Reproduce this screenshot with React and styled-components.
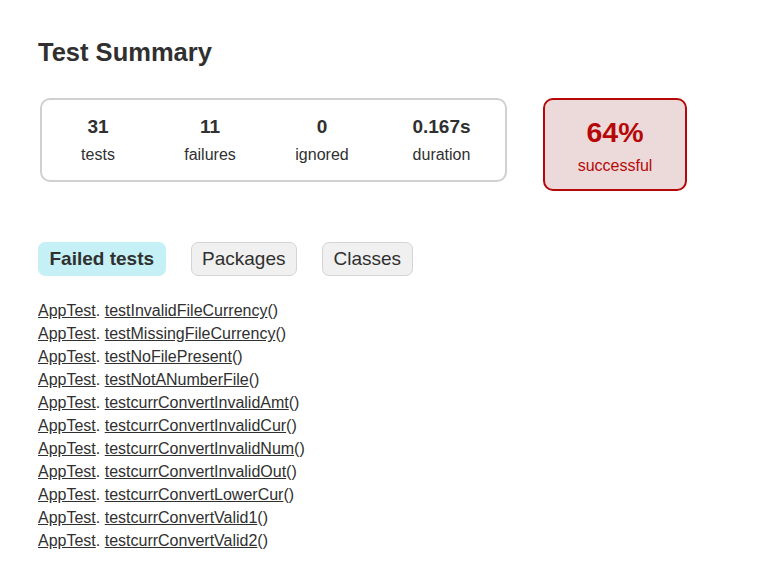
import styled, { createGlobalStyle } from 'styled-components';

const GlobalStyle = createGlobalStyle`
  body {
    margin: 0;
    padding: 0;
    background: #ffffff;
    font-family: "Liberation Sans", Arial, sans-serif;
    font-size: 16px;
    color: #303030;
  }
`;

const Content = styled.div`
  padding: 38px 38px 20px;
`;

const Title = styled.h1`
  margin: 0;
  font-size: 25.5px;
  font-weight: bold;
  line-height: 1.15;
`;

const Summary = styled.div`
  display: flex;
  align-items: flex-start;
  margin-top: 31px;
  margin-left: 2px;
`;

const SummaryGroup = styled.div`
  display: flex;
  border: 2px solid #d0d0d0;
  border-radius: 10px;
`;

const InfoBox = styled.div`
  width: ${(p) => p.$width || 112}px;
  padding: 16px 0 16px;
  text-align: center;
`;

const Counter = styled.p`
  margin: 0 0 8px;
  font-size: 19px;
  font-weight: bold;
  line-height: 22px;
`;

const Label = styled.p`
  margin: 0;
  line-height: 18px;
`;

const SuccessRate = styled.div`
  width: 140px;
  margin-left: 36px;
  padding: 16px 0 14px;
  text-align: center;
  color: #b60808;
  background: #ecdada;
  border: 2px solid #b60808;
  border-radius: 10px;
`;

const Percent = styled.p`
  margin: 0 0 8px;
  font-size: 28.5px;
  font-weight: bold;
  line-height: 33px;
`;

const Tabs = styled.ul`
  display: flex;
  list-style: none;
  margin: 51px 0 0;
  padding: 0;
  gap: 25px;
`;

const Tab = styled.li`
  padding: 5px 10.5px;
  border: 1px solid ${(p) => (p.$selected ? '#c5f0f5' : '#d4d4d4')};
  background: ${(p) => (p.$selected ? '#c5f0f5' : '#f0f0f0')};
  border-radius: 7px;
  font-size: 19px;
  line-height: 22px;
  font-weight: ${(p) => (p.$selected ? 'bold' : 'normal')};
`;

const LinkList = styled.ul`
  list-style: none;
  margin: 26px 0 0;
  padding: 0;
`;

const Item = styled.li`
  line-height: 18px;
  padding-bottom: 5px;
`;

const Link = styled.a`
  color: #303030;
  text-decoration: underline;
`;

const stats = [
  { value: '31', label: 'tests' },
  { value: '11', label: 'failures' },
  { value: '0', label: 'ignored' },
  { value: '0.167s', label: 'duration', width: 127 },
];

const failed = [
  'testInvalidFileCurrency',
  'testMissingFileCurrency',
  'testNoFilePresent',
  'testNotANumberFile',
  'testcurrConvertInvalidAmt',
  'testcurrConvertInvalidCur',
  'testcurrConvertInvalidNum',
  'testcurrConvertInvalidOut',
  'testcurrConvertLowerCur',
  'testcurrConvertValid1',
  'testcurrConvertValid2',
];

export default function App() {
  return (
    <>
      <GlobalStyle />
      <Content>
        <Title>Test Summary</Title>
        <Summary>
          <SummaryGroup>
            {stats.map((s) => (
              <InfoBox key={s.label} $width={s.width}>
                <Counter>{s.value}</Counter>
                <Label>{s.label}</Label>
              </InfoBox>
            ))}
          </SummaryGroup>
          <SuccessRate>
            <Percent>64%</Percent>
            <Label>successful</Label>
          </SuccessRate>
        </Summary>
        <Tabs>
          <Tab $selected>Failed tests</Tab>
          <Tab>Packages</Tab>
          <Tab>Classes</Tab>
        </Tabs>
        <LinkList>
          {failed.map((t) => (
            <Item key={t}>
              <Link href="#">AppTest</Link>. <Link href="#">{t}</Link>()
            </Item>
          ))}
        </LinkList>
      </Content>
    </>
  );
}
